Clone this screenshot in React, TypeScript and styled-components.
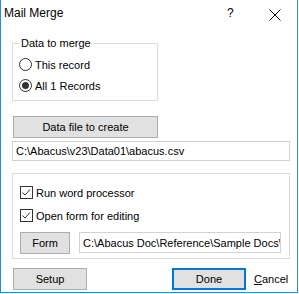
import React from "react";
import styled, { createGlobalStyle } from "styled-components";

const Global = createGlobalStyle`
  html, body { margin: 0; padding: 0; background: #ffffff; }
  * { box-sizing: border-box; }
`;

const Window = styled.div`
  width: 298px;
  height: 293px;
  background: #ffffff;
  border: 1px solid #2b88d8;
  border-top: none;
  font-family: "Liberation Sans", Arial, sans-serif;
  font-size: 11px;
  color: #000;
  display: flex;
  flex-direction: column;
`;

const TitleBar = styled.div`
  height: 30px;
  display: flex;
  align-items: flex-start;
  padding: 6px 16px 0 3px;
  font-size: 12px;
  line-height: 14px;
`;

const Title = styled.div`
  flex: 1;
`;

const HelpGlyph = styled.span`
  width: 7px;
  margin-right: 35px;
`;

const CloseIcon = styled.svg`
  width: 12px;
  height: 12px;
  margin-top: 3px;
`;

const Body = styled.div`
  padding-left: 11px;
  display: flex;
  flex-direction: column;
  align-items: flex-start;
`;

const GroupBox = styled.div<{ $w: number; $h: number; $mt: number; $pt: number }>`
  position: relative;
  width: ${(p) => p.$w}px;
  height: ${(p) => p.$h}px;
  margin-top: ${(p) => p.$mt}px;
  padding-top: ${(p) => p.$pt}px;
  padding-left: 6px;
  border: 1px solid #dcdcdc;
  display: flex;
  flex-direction: column;
`;

const Legend = styled.span`
  position: absolute;
  top: -7px;
  left: 6px;
  padding: 0 2px;
  background: #fff;
  line-height: 13px;
`;

const OptionRow = styled.div<{ $h?: number; $mt?: number }>`
  display: flex;
  align-items: center;
  height: ${(p) => p.$h ?? 21}px;
  margin-top: ${(p) => p.$mt ?? 0}px;
`;

const RadioCircle = styled.span<{ $checked?: boolean }>`
  width: 13px;
  height: 13px;
  border: 1px solid #333;
  border-radius: 50%;
  display: flex;
  align-items: center;
  justify-content: center;
  margin-right: 3px;
  &::after {
    content: "";
    width: 7px;
    height: 7px;
    border-radius: 50%;
    background: ${(p) => (p.$checked ? "#333" : "transparent")};
  }
`;

const CheckBox = styled.span`
  width: 13px;
  height: 13px;
  border: 1px solid #333;
  margin-left: 1px;
  margin-right: 3px;
  display: flex;
`;

const PushButton = styled.div<{ $w: number; $ml?: number; $default?: boolean }>`
  width: ${(p) => p.$w}px;
  height: 22px;
  margin-left: ${(p) => p.$ml ?? 0}px;
  background: #e1e1e1;
  border: ${(p) => (p.$default ? "2px solid #0078d7" : "1px solid #adadad")};
  display: flex;
  align-items: center;
  justify-content: center;
  flex-shrink: 0;
`;

const TextField = styled.div<{ $w: number; $h: number; $ml?: number; $mt?: number }>`
  width: ${(p) => p.$w}px;
  height: ${(p) => p.$h}px;
  margin-left: ${(p) => p.$ml ?? 0}px;
  margin-top: ${(p) => p.$mt ?? 0}px;
  border: 1px solid #d2d2d2;
  padding-left: 3px;
  display: flex;
  align-items: center;
  white-space: nowrap;
  overflow: hidden;
  flex-shrink: 0;
`;

const Spacer = styled.div<{ $h: number }>`
  height: ${(p) => p.$h}px;
  flex-shrink: 0;
`;

const FormRow = styled.div`
  display: flex;
  align-items: flex-start;
  margin-top: 10px;
  margin-left: 1px;
`;

const Footer = styled.div`
  display: flex;
  align-items: center;
  margin-top: 9px;
  margin-left: 1px;
`;

const LinkLabel = styled.span`
  margin-left: 8px;
  & u { text-decoration: underline; text-underline-offset: 1px; }
`;

const CheckMark = () => (
  <svg width="11" height="11" viewBox="0 0 11 11">
    <path d="M1.5 5.5 L4 8 L9 2.5" fill="none" stroke="#333" strokeWidth="1" />
  </svg>
);

export default function App() {
  return (
    <>
      <Global />
      <Window>
        <TitleBar>
          <Title>Mail Merge</Title>
          <HelpGlyph>?</HelpGlyph>
          <CloseIcon viewBox="0 0 12 12">
            <path d="M0.5 0.5 L11.5 11.5 M11.5 0.5 L0.5 11.5" stroke="#000" strokeWidth="1" fill="none" />
          </CloseIcon>
        </TitleBar>
        <Body>
          <GroupBox $w={146} $h={58} $mt={13} $pt={10}>
            <Legend>Data to merge</Legend>
            <OptionRow>
              <RadioCircle />
              This record
            </OptionRow>
            <OptionRow>
              <RadioCircle $checked />
              All 1 Records
            </OptionRow>
          </GroupBox>
          <Spacer $h={15} />
          <PushButton $w={145} $ml={1}>Data file to create</PushButton>
          <TextField $w={278} $h={20} $mt={3}>C:\Abacus\v23\Data01\abacus.csv</TextField>
          <GroupBox $w={278} $h={86} $mt={12} $pt={12}>
            <OptionRow $h={13}>
              <CheckBox><CheckMark /></CheckBox>
              Run word processor
            </OptionRow>
            <OptionRow $h={13} $mt={10}>
              <CheckBox><CheckMark /></CheckBox>
              Open form for editing
            </OptionRow>
            <FormRow>
              <PushButton $w={50}>Form</PushButton>
              <TextField $w={202} $h={21} $ml={9}>C:\Abacus Doc\Reference\Sample Docs\</TextField>
            </FormRow>
          </GroupBox>
          <Footer>
            <PushButton $w={74}>Setup</PushButton>
            <PushButton $w={74} $ml={85} $default>Done</PushButton>
            <LinkLabel><u>C</u>ancel</LinkLabel>
          </Footer>
        </Body>
      </Window>
    </>
  );
}
